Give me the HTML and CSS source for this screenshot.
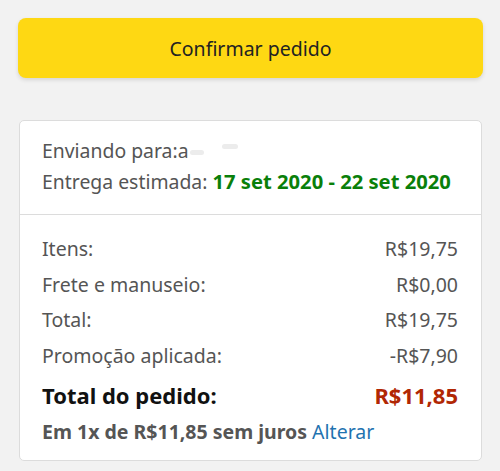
FILE: index.html
```html
<!DOCTYPE html>
<html lang="pt-BR">
<head>
<meta charset="utf-8">
<link rel="stylesheet" href="styles.css">
</head>
<body>
<div class="page">
  <button class="confirm">Confirmar pedido</button>
  <div class="card">
    <div class="ship">
      <div class="line">Enviando para:a<span class="blur b1"></span><span class="blur b2"></span></div>
      <div class="line">Entrega estimada: <span class="date">17 set 2020 - 22 set 2020</span></div>
    </div>
    <div class="summary">
      <div class="row"><span>Itens:</span><span>R$19,75</span></div>
      <div class="row"><span>Frete e manuseio:</span><span>R$0,00</span></div>
      <div class="row"><span>Total:</span><span>R$19,75</span></div>
      <div class="row"><span>Promoção aplicada:</span><span>-R$7,90</span></div>
      <div class="row total"><span>Total do pedido:</span><span class="price">R$11,85</span></div>
      <div class="install">Em 1x de R$11,85 sem juros <a class="link">Alterar</a></div>
    </div>
  </div>
</div>
</body>
</html>
```

FILE: styles.css
```css
html, body {
  margin: 0;
  padding: 0;
  background: #f2f2f2;
}
body {
  font-family: "Noto Sans", "Open Sans", sans-serif;
  color: #555;
}
.page {
  padding: 18px 17px 0 18px;
  display: flex;
  flex-direction: column;
}
.confirm {
  height: 60px;
  border: none;
  border-radius: 8px;
  background: #fed813;
  box-shadow: 0 2px 4px rgba(0,0,0,0.12);
  font-family: inherit;
  font-size: 19.5px;
  color: #222;
  padding: 0;
}
.card {
  margin-top: 42px;
  margin-left: 1px;
  margin-right: 1px;
  background: #fff;
  border: 1px solid #dcdcdc;
  border-radius: 5px;
}
.ship {
  padding: 15px 22px 18px;
  border-bottom: 1px solid #dcdcdc;
  font-size: 19.4px;
}
.line {
  height: 30px;
  line-height: 30px;
  white-space: nowrap;
}
.date {
  color: #0a7f0a;
  font-weight: 700;
  font-size: 20.2px;
}
.blur {
  display: inline-block;
  height: 5px;
  border-radius: 3px;
  background: #ececec;
  vertical-align: middle;
}
.b1 { width: 14px; margin-left: 1px; }
.b2 { width: 16px; margin-left: 18px; margin-top: -12px; }
.summary {
  padding: 16px 23px 10px 22px;
  font-size: 19.5px;
}
.row {
  display: flex;
  justify-content: space-between;
  height: 35.5px;
  line-height: 35.5px;
}
.total {
  margin-top: 3px;
  font-weight: 700;
  font-size: 22px;
  color: #111;
  height: 38px;
  line-height: 38px;
}
.price {
  color: #b12704;
}
.install {
  font-weight: 700;
  font-size: 19.5px;
  height: 36px;
  line-height: 36px;
  white-space: nowrap;
}
.link {
  color: #1f73b0;
  font-weight: 400;
}
```
